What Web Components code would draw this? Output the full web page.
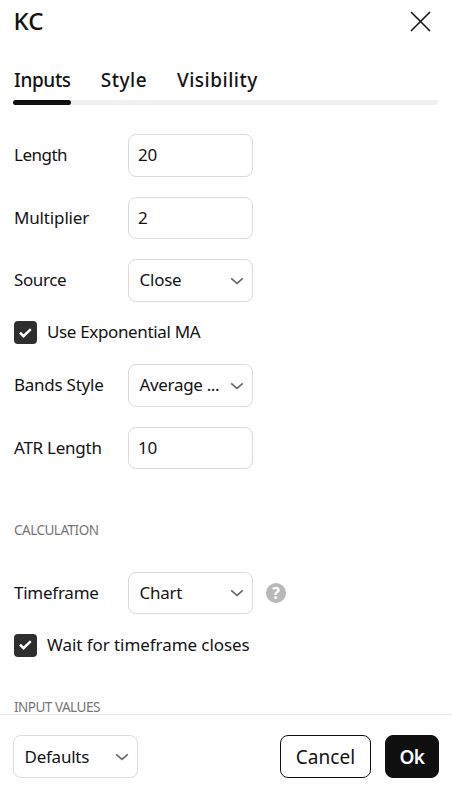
<!DOCTYPE html>
<html lang="en">
<head>
<meta charset="UTF-8">
<title>KC</title>
<style>
    html, body {
        margin: 0;
        height: 100%;
        overflow: hidden;
        background: #fff;
    }
</style>
</head>
<body>
<indicator-dialog></indicator-dialog>

<script>
    const define = (name, html) => {
        const template = document.createElement('template');
        template.innerHTML = html;
        customElements.define(name, class extends HTMLElement {
            constructor() {
                super();
                this.attachShadow({ mode: 'open' }).appendChild(template.content.cloneNode(true));
            }
        });
    };

    define('tab-item', `
        <style>
            :host {
                display: block;
                position: relative;
                height: 39px;
                line-height: 29px;
                font-size: 19px;
                font-weight: 500;
                white-space: nowrap;
                cursor: pointer;
            }
            :host([active])::after {
                content: '';
                position: absolute;
                left: -1px;
                right: 0;
                bottom: 0;
                height: 5px;
                border-radius: 3px;
                background: #0f0f0f;
            }
        </style>
        <slot></slot>
    `);

    define('form-row', `
        <style>
            :host {
                display: flex;
                align-items: center;
                height: 42.5px;
            }
            .label {
                width: 114px;
                flex: none;
                padding-bottom: 1px;
                white-space: nowrap;
            }
        </style>
        <div class="label"><slot name="label"></slot></div>
        <slot></slot>
    `);

    define('text-field', `
        <style>
            :host {
                display: flex;
                align-items: center;
                box-sizing: border-box;
                width: 125px;
                height: 100%;
                padding: 0 9px 1px;
                border: 1px solid #dbdbdb;
                border-radius: 8px;
                background: #fff;
            }
        </style>
        <slot></slot>
    `);

    define('select-field', `
        <style>
            :host {
                display: flex;
                align-items: center;
                justify-content: space-between;
                box-sizing: border-box;
                width: 125px;
                height: 100%;
                padding: 0 8px 0 10.5px;
                border: 1px solid #dbdbdb;
                border-radius: 8px;
                background: #fff;
                white-space: nowrap;
            }
            span {
                padding-bottom: 1px;
            }
            svg {
                flex: none;
                margin-top: 1px;
            }
        </style>
        <span><slot></slot></span>
        <svg width="14" height="8" viewBox="0 0 14 8" fill="none" stroke="#6a6a6a" stroke-width="1.7">
            <path d="M1.2 1.3 7 6.3l5.8-5"/>
        </svg>
    `);

    define('check-box', `
        <style>
            :host {
                display: flex;
                align-items: center;
                gap: 10px;
                height: 22.5px;
                white-space: nowrap;
            }
            .box {
                display: flex;
                align-items: center;
                justify-content: center;
                width: 23px;
                height: 23px;
                border-radius: 4px;
                background: #2e2e2e;
            }
            span {
                padding-bottom: 2px;
            }
        </style>
        <div class="box">
            <svg width="13" height="10" viewBox="0 0 13 10" fill="none" stroke="#fff" stroke-width="2.5">
                <path d="M1 4.7 4.5 8.2 11.8 1.2"/>
            </svg>
        </div>
        <span><slot></slot></span>
    `);

    define('section-title', `
        <style>
            :host {
                display: block;
                height: 20px;
                line-height: 20px;
                font-size: 13.5px;
                letter-spacing: -.5px;
                color: #757575;
                white-space: nowrap;
            }
        </style>
        <slot></slot>
    `);

    define('help-hint', `
        <style>
            :host {
                display: block;
                margin-left: 13px;
                width: 20px;
                height: 20px;
                border-radius: 50%;
                background: #b8b8b8;
                color: #fff;
                font: bold 16px/20px 'Open Sans', sans-serif;
                text-align: center;
            }
        </style>
        ?
    `);

    define('dialog-button', `
        <style>
            :host {
                display: flex;
                align-items: center;
                justify-content: center;
                box-sizing: border-box;
                height: 43px;
                border: 1px solid #0f0f0f;
                border-radius: 8px;
                font-size: 19px;
                color: #131313;
                cursor: pointer;
            }
            :host([primary]) {
                background: #0f0f0f;
                color: #fff;
                font-weight: 600;
            }
        </style>
        <span><slot></slot></span>
    `);

    define('indicator-dialog', `
        <style>
            :host {
                display: flex;
                flex-direction: column;
                height: 100vh;
                font-family: 'Noto Sans', sans-serif;
                font-size: 17px;
                letter-spacing: -.25px;
                color: #131313;
                background: #fff;
            }
            header {
                display: flex;
                align-items: center;
                justify-content: space-between;
                flex: none;
                height: 42px;
                padding: 0 21px 0 13.5px;
            }
            h1 {
                margin: 0;
                font-size: 24px;
                font-weight: 500;
                line-height: 42px;
                letter-spacing: 0;
            }
            nav {
                display: flex;
                gap: 30px;
                flex: none;
                height: 39px;
                margin: 24px 14px 0;
                border-radius: 0 0 3px 3px;
                background: linear-gradient(#f0f0f0, #f0f0f0) 0 100% / 100% 5px no-repeat;
            }
            main {
                flex: 1;
                min-height: 0;
                overflow: hidden;
                padding: 29px 14px 0;
            }
            .fields {
                display: flex;
                flex-direction: column;
                gap: 20px;
            }
            .calculation {
                margin-top: 50.5px;
            }
            .calculation + .fields {
                margin-top: 32px;
            }
            .values {
                margin-top: 40px;
            }
            .tight {
                letter-spacing: -.4px;
            }
            .loose {
                letter-spacing: -.06px;
            }
            footer {
                display: flex;
                align-items: flex-start;
                flex: none;
                height: 74px;
                box-sizing: border-box;
                padding: 20px 13px 0;
                border-top: 1px solid #e9e9e9;
            }
            footer select-field {
                height: 43px;
            }
            .cancel {
                width: 91px;
                margin: 0 14px 0 auto;
                letter-spacing: .1px;
            }
            .ok {
                width: 54px;
                letter-spacing: -.5px;
            }
        </style>
        <header>
            <h1>KC</h1>
            <svg width="21" height="21" viewBox="0 0 21 21" fill="none" stroke="#131313" stroke-width="1.6">
                <path d="M1 1l19 19M20 1 1 20"/>
            </svg>
        </header>
        <nav>
            <tab-item active style="letter-spacing: -.35px">Inputs</tab-item>
            <tab-item style="letter-spacing: .5px">Style</tab-item>
            <tab-item style="letter-spacing: .5px">Visibility</tab-item>
        </nav>
        <main>
            <div class="fields">
                <form-row><span slot="label" style="letter-spacing: -.5px">Length</span><text-field>20</text-field></form-row>
                <form-row><span slot="label" style="letter-spacing: -.15px">Multiplier</span><text-field>2</text-field></form-row>
                <form-row><span slot="label" class="tight">Source</span><select-field>Close</select-field></form-row>
                <check-box style="letter-spacing: -.35px">Use Exponential MA</check-box>
                <form-row><span slot="label">Bands Style</span><select-field style="letter-spacing: -.33px">Average ...</select-field></form-row>
                <form-row><span slot="label">ATR Length</span><text-field>10</text-field></form-row>
            </div>
            <section-title class="calculation">CALCULATION</section-title>
            <div class="fields">
                <form-row><span slot="label">Timeframe</span><select-field>Chart</select-field><help-hint></help-hint></form-row>
                <check-box class="loose">Wait for timeframe closes</check-box>
            </div>
            <section-title class="values">INPUT VALUES</section-title>
        </main>
        <footer>
            <select-field>Defaults</select-field>
            <dialog-button class="cancel">Cancel</dialog-button>
            <dialog-button class="ok" primary>Ok</dialog-button>
        </footer>
    `);
</script>
</body>
</html>
